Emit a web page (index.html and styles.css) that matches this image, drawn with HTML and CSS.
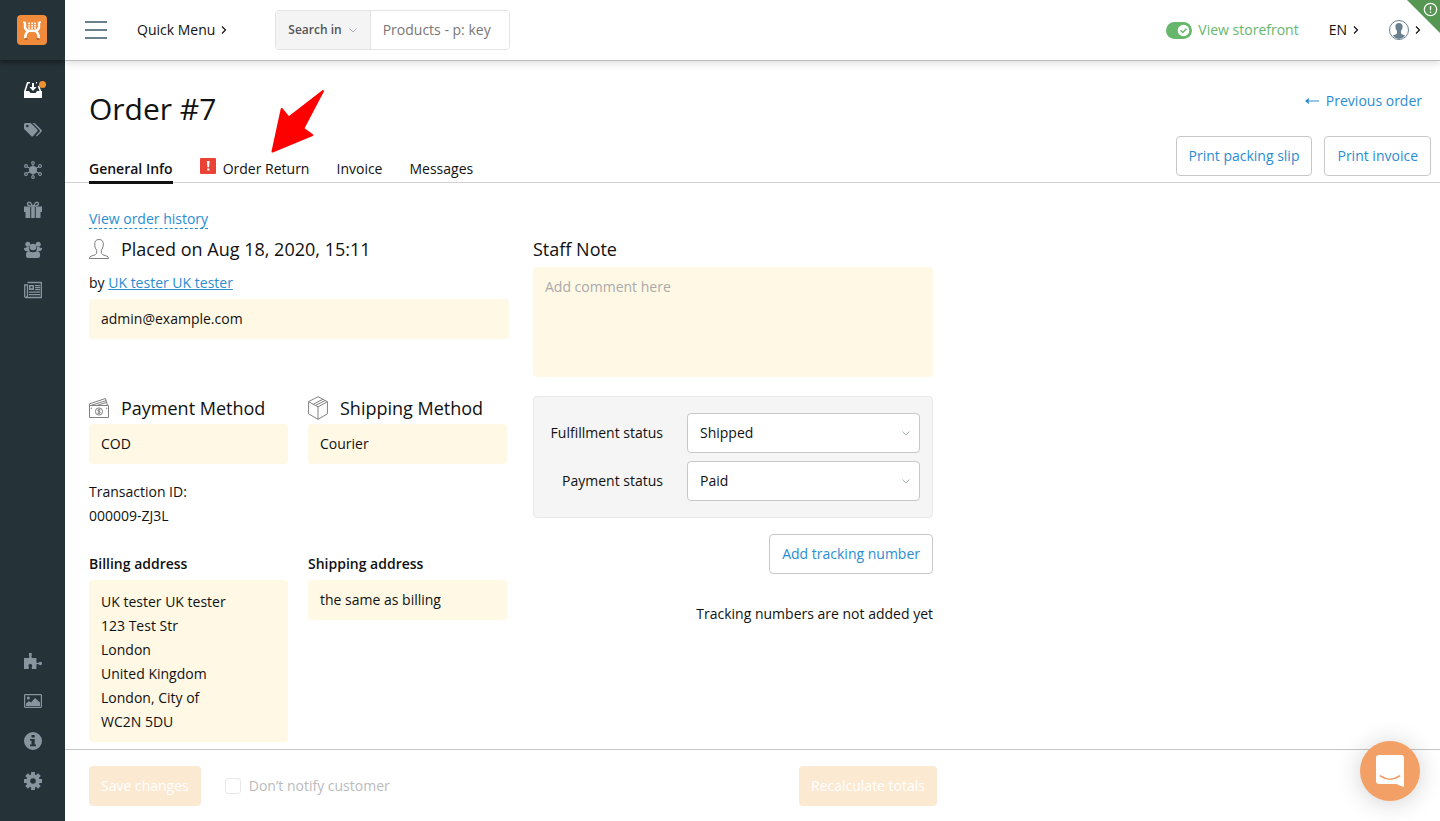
FILE: index.html
```html
<!DOCTYPE html>
<html lang="en">
<head>
<meta charset="utf-8">
<meta name="viewport" content="width=device-width, initial-scale=1">
<title>Order #7</title>
<link rel="stylesheet" href="styles.css">
</head>
<body>
<div class="app">
  <aside class="sidebar">
    <a class="logo" href="#" aria-label="Dashboard">
      <svg width="30" height="30" viewBox="0 0 30 30">
        <rect width="30" height="30" rx="4" fill="#ef8b3b"/>
        <path d="M8 7.500V12Q8 14.800 11.300 15.800H18.700Q22 14.800 22 12V7.500M8.300 23.500V22Q8.300 18 11.300 16.200M21.700 23.500V22Q21.700 18 18.700 16.200" fill="none" stroke="#fff" stroke-width="2.400"/>
        <path d="M6 7.200h2.500M21.500 7.200H24" stroke="#fff" stroke-width="1.400"/>
        <path d="M7.500 24h3M19.500 24h3" stroke="#a85e2c" stroke-width="1.500"/>
        <path d="M11.200 8.400h8M11.200 10.700h8M11.200 13h8" stroke="#fff" stroke-width="1.600" stroke-dasharray="1.800 1.200"/>
      </svg>
    </a>
    <nav class="side-nav" aria-label="Main">
      <a class="is-active" href="#" aria-label="Orders">
        <svg width="18" height="18" viewBox="0 0 18 18"><path d="M0 10v7h18v-7h-5l-1.500 2h-5L5 10z"/><path d="M6 1.800H3.600L.8 10.500M12 1.800h1M14.500 5l2 5.500" fill="none" stroke="currentColor" stroke-width="1.600"/><path d="M8 2h2v4h2.500L9 10 5.500 6H8z"/></svg>
        <span class="dot"></span>
      </a>
      <a href="#" aria-label="Catalog"><svg width="18" height="18" viewBox="0 0 18 18"><path fill-rule="evenodd" d="M0 3.500Q0 2 1.500 2h4.200q.9 0 1.500.6l6 6q1 1 0 2l-4 4.300q-1 1-2 0L.6 8.500Q0 7.900 0 7zM2 5a1.300 1.300 0 1 0 2.600 0A1.300 1.300 0 1 0 2 5z"/><path d="M8.500 2h1.300q.7 0 1.300.6l6.300 6.200q1 1 0 2l-4.500 4.700-.9-1 3.600-3.700q.7-.9-.1-1.700z"/></svg></a>
      <a href="#" aria-label="Sales channels"><svg width="18" height="18" viewBox="0 0 18 18"><circle cx="9" cy="9" r="4"/><g fill="none" stroke="currentColor" stroke-width="1.100"><circle cx="9" cy="1.900" r="1.300"/><circle cx="9" cy="16.100" r="1.300"/><circle cx="2" cy="5" r="1.400"/><circle cx="16" cy="5" r="1.400"/><circle cx="2" cy="13" r="1.400"/><circle cx="16" cy="13" r="1.400"/><path d="M9 3v12M3.200 5.700l11.600 6.600M3.200 12.300l11.600-6.600"/></g></svg></a>
      <a href="#" aria-label="Discounts"><svg width="18" height="18" viewBox="0 0 18 18"><path d="M0 5.500h6.200V17H1.500v-6H0zM11.800 5.500H18V11h-1.500v6h-4.700zM7.200 5.500h3.600V17H7.200z"/><path d="M8.700 5L6.500 1.800Q3.800.3 3.500 2.800q0 2 3 2.200zM9.300 5l2.200-3.200q2.700-1.500 3 1 0 2-3 2.200z" fill="none" stroke="currentColor" stroke-width="1.300"/></svg></a>
      <a href="#" aria-label="Users"><svg width="18" height="18" viewBox="0 0 18 18"><circle cx="3.800" cy="3.300" r="2.500"/><circle cx="14.200" cy="3.300" r="2.500"/><path d="M0 7q2 0 3-1h2.300Q4.800 9 6 10H2q-2 0-2-3zM18 7q-2 0-3-1h-2.300q.5 3-.7 4h4q2 0 2-3z"/><circle cx="9" cy="6" r="3.300"/><path d="M2 13.500Q2 10 5 10q4 2.500 8 0 3 0 3 3.500V15q0 2-2 2H4q-2 0-2-2z"/></svg></a>
      <a href="#" aria-label="Content"><svg width="18" height="18" viewBox="0 0 18 18"><path d="M3.500 1.500h13.800v15H2Q.7 16.500.7 15V4h2.800v10.500q0 1.500-1.500 1.500" fill="none" stroke="currentColor" stroke-width="1.300"/><path fill-rule="evenodd" d="M5 4h5v5H5zM6.500 5.500v1.700h2V5.500zM11 4h5v1.200h-5zM11 6h5v1.200h-5zM11 8h5v1.200h-5zM5 10.500h11v1.200H5zM5 13h11v1.200H5z"/></svg></a>
    </nav>
    <nav class="side-nav side-nav-bottom" aria-label="System">
      <a href="#" aria-label="Add-ons"><svg width="18" height="18" viewBox="0 0 18 18"><path d="M0 6h5q.8-1.700-.2-3.300Q4.500.8 6.300.8t1.600 1.900Q7 4.300 7.800 6h4.600v4.500q1 .8 2.600 0 .7-1 1.700-.8 1.300.3 1.300 1.800t-1.300 1.800q-1 .2-1.700-.8-1.600-.8-2.600 0V17H8q-.8-1.500.2-3 .3-2-1.900-2t-1.900 2q1 1.500.2 3H0z"/></svg></a>
      <a href="#" aria-label="Look and feel"><svg width="18" height="18" viewBox="0 0 18 18"><rect x=".6" y="2.600" width="16.800" height="12.800" rx=".8" fill="none" stroke="currentColor" stroke-width="1.200"/><circle cx="4.300" cy="6" r="1.600"/><path d="M2 14v-2.500L5 9l2 1.500L11 6l5 4.500V14z"/></svg></a>
      <a href="#" aria-label="Help"><svg width="18" height="18" viewBox="0 0 18 18"><path fill-rule="evenodd" d="M9 0a9 9 0 1 1 0 18A9 9 0 0 1 9 0zM7.500 3v2.600h3.200V3zM6 7v1.800h1.500v3.700H6v1.800h6v-1.800h-1.300V7z"/></svg></a>
      <a href="#" aria-label="Settings"><svg width="18" height="18" viewBox="0 0 18 18"><g fill="none" stroke="currentColor"><circle cx="9" cy="9" r="4.800" stroke-width="4"/><path d="M9 0v3M9 15v3M0 9h3M15 9h3M2.600 2.600l2.200 2.200M13.200 13.200l2.200 2.200M2.600 15.400l2.200-2.200M13.200 4.800l2.200-2.200" stroke-width="3.800"/></g></svg></a>
    </nav>
  </aside>

  <div class="main">
    <header class="topbar">
      <button class="burger" type="button" aria-label="Toggle menu"><span></span><span></span><span></span></button>
      <button class="plain quick-menu" type="button">Quick Menu <svg width="6" height="8" viewBox="0 0 6 8"><path d="M1 .5L4.500 4 1 7.500"/></svg></button>
      <form class="search">
        <button class="search-scope" type="button">Search in <svg width="8" height="5" viewBox="0 0 8 5"><path d="M.5.5L4 4 7.500.5"/></svg></button>
        <input class="search-input" type="text" aria-label="Search" placeholder="Products - p: key">
      </form>
      <div class="top-actions">
        <a class="storefront" href="#">
          <svg width="26" height="17" viewBox="0 0 26 17"><rect width="26" height="17" rx="8.500" fill="#66b76c"/><circle cx="17.500" cy="8.500" r="5.800" fill="#fff"/><path d="M14.500 8.300l2.200 2.200 3.800-3.800" fill="none" stroke="#66b76c" stroke-width="1.500"/></svg>
          View storefront</a>
        <button class="plain" type="button">EN <svg width="6" height="8" viewBox="0 0 6 8"><path d="M1 .5L4.500 4 1 7.500"/></svg></button>
        <button class="plain account" type="button" aria-label="Account">
          <svg class="avatar" width="20" height="20" viewBox="0 0 20 20"><circle cx="10" cy="10" r="9.500" fill="#fff" stroke="#6b808f"/><path d="M10 3q3.600 0 3.600 3.700 0 2.800-1.600 4.300v2.500q.5 1 4.300 2.100Q13.500 19 10 19t-6.300-3.400Q7.500 14.500 8 13.500V11Q6.400 9.500 6.400 6.700 6.400 3 10 3z" fill="#6b808f"/></svg>
          <svg width="6" height="8" viewBox="0 0 6 8"><path d="M1 .5L4.500 4 1 7.500"/></svg>
        </button>
      </div>
      <a class="corner" href="#" aria-label="Notices"><svg width="33" height="33" viewBox="0 0 33 33"><path d="M0 0h33v33z" fill="#559652"/><circle cx="23.500" cy="9.500" r="6.200" fill="none" stroke="#fff" stroke-width="1.300"/><path d="M23.500 6v4.300M23.500 11.500v1.500" stroke="#fff" stroke-width="1.300"/></svg></a>
    </header>

    <section class="page-head">
      <div class="head-left">
        <h1>Order #7</h1>
        <nav class="tabs" aria-label="Order sections">
          <a class="is-current" href="#">General Info</a>
          <a href="#"><svg width="16" height="16" viewBox="0 0 16 16"><rect width="16" height="16" rx="1" fill="#ea4335"/><path d="M6.900 3h2.700l-.5 6.200H7.400zM7.200 10.500h2.200v2H7.200z" fill="#fff"/></svg>Order Return</a>
          <a href="#">Invoice</a>
          <a href="#">Messages</a>
        </nav>
      </div>
      <div class="head-right">
        <a class="prev" href="#"><svg width="14" height="8" viewBox="0 0 14 8"><path d="M1 4h13" stroke="#2a8dd2"/><path d="M0 4l4-3.200Q3.200 4 4 7.200z" fill="#2a8dd2"/></svg>Previous order</a>
        <div class="head-buttons">
          <button class="btn" type="button">Print packing slip</button>
          <button class="btn" type="button">Print invoice</button>
        </div>
      </div>
      <svg class="pointer" width="56" height="66" viewBox="0 0 56 66"><path d="M2.500 63.500L11.700 21l7 8.500L53 3 33.300 40.500l9 6.500z" fill="#f00" stroke="#f00" stroke-width="2" stroke-linejoin="round"/></svg>
    </section>

    <main class="content">
      <a class="history" href="#">View order history</a>
      <section class="customer">
        <h2><svg width="20" height="20" viewBox="0 0 20 20"><path d="M10 .5Q14.700.5 14.300 6q-.3 3.500-2 5.200v3q.3 1.700 5.700 3 1.500.6 1.500 2.300H.5q0-1.700 1.500-2.300 5.400-1.300 5.700-3v-3Q6 9.500 5.700 6 5.300.5 10 .5z"/></svg>Placed on Aug 18, 2020, 15:11</h2>
        <p class="by">by <a href="#">UK tester UK tester</a></p>
        <div class="field">admin@example.com</div>
      </section>
      <section class="note">
        <h2><label for="note">Staff Note</label></h2>
        <textarea id="note" placeholder="Add comment here"></textarea>
      </section>
      <section class="methods">
        <div>
          <h2><svg width="20" height="24" viewBox="0 0 20 24"><path d="M.5 9.500h19v12H.5zM.5 9.500V7.800L16.500 2.500l2 7M2.500 9.200l14.500-4.500M8 9.400l9.800-3M3 12q-1 0-1 1M17 12q1 0 1 1"/><circle cx="10" cy="15.500" r="3.600"/><path d="M11.500 14q-1.500-1-2.500 0t1 1.500 1 1.500-2.500 0M10 13v5"/></svg>Payment Method</h2>
          <div class="field">COD</div>
          <p class="transaction">Transaction ID:<br>000009-ZJ3L</p>
          <h3>Billing address</h3>
          <address class="field address">UK tester UK tester<br>123 Test Str<br>London<br>United Kingdom<br>London, City of<br>WC2N 5DU</address>
        </div>
        <div>
          <h2><svg width="20" height="24" viewBox="0 0 20 24"><path d="M10 .7l9.400 5v12.200L10 23.300.6 17.900V5.700zM.6 5.700l9.400 5.200 9.400-5.200M10 10.900v12.400M5.300 8.300l9.500-5M7.500 9.500l9.500-5"/></svg>Shipping Method</h2>
          <div class="field">Courier</div>
          <p class="transaction"></p>
          <h3>Shipping address</h3>
          <div class="field">the same as billing</div>
        </div>
      </section>
      <section class="status">
        <div class="panel">
          <label for="fulfillment">Fulfillment status</label>
          <div class="select"><select id="fulfillment"><option>Shipped</option></select><svg width="8" height="5" viewBox="0 0 8 5"><path d="M.5.5L4 4 7.500.5"/></svg></div>
          <label for="payment">Payment status</label>
          <div class="select"><select id="payment"><option>Paid</option></select><svg width="8" height="5" viewBox="0 0 8 5"><path d="M.5.5L4 4 7.500.5"/></svg></div>
        </div>
        <button class="btn" type="button">Add tracking number</button>
        <p>Tracking numbers are not added yet</p>
      </section>
    </main>

    <footer class="actions">
      <div class="actions-left">
        <button class="btn-primary" type="button" disabled>Save changes</button>
        <label class="notify"><input type="checkbox" disabled>Don’t notify customer</label>
      </div>
      <button class="btn-primary" type="button" disabled>Recalculate totals</button>
    </footer>
  </div>
</div>
<button class="chat" type="button" aria-label="Open chat"><svg width="28" height="32" viewBox="0 0 28 32"><path d="M3 0h22q3 0 3 3v29q-4-1-7.500-3H3q-3 0-3-3V3q0-3 3-3z" fill="#fff"/><path d="M4.500 21q9.500 6.500 19 0" fill="none" stroke="#f3a066" stroke-width="1.700" stroke-linecap="round"/></svg></button>
</body>
</html>
```
FILE: styles.css
```css
* { box-sizing: border-box; }

body {
  margin: 0;
  font: 14px/24px "Open Sans", "Noto Sans", sans-serif;
  color: #111;
  background: #fff;
}

h1, h2, h3, p { margin: 0; }
button, input, select, textarea { font: inherit; color: inherit; }
button { cursor: pointer; }
a { color: #2a8dd2; text-decoration: none; }

.app { display: flex; min-height: 100vh; }

/* Sidebar */
.sidebar {
  display: flex;
  flex-direction: column;
  width: 65px;
  flex-shrink: 0;
  background: #253238;
  color: #88959f;
}
.logo {
  display: flex;
  align-items: center;
  height: 60px;
  padding-left: 17px;
  box-shadow: 0 1px 6px 1px rgba(0, 0, 0, .5);
  clip-path: inset(0 0 -10px 0);
}
.logo svg { display: block; }
.side-nav { padding-top: 10px; }
.side-nav a {
  position: relative;
  display: flex;
  align-items: center;
  justify-content: center;
  height: 40px;
  color: inherit;
}
.side-nav svg { fill: currentColor; }
.side-nav .is-active { color: #fff; }
.dot {
  position: absolute;
  top: 11px;
  right: 19px;
  width: 7px;
  height: 7px;
  border-radius: 50%;
  background: #f29130;
}
.side-nav-bottom { margin-top: auto; padding-bottom: 20px; }

/* Top bar */
.main { display: flex; flex-direction: column; flex: 1; min-width: 0; }
.topbar {
  position: relative;
  display: flex;
  align-items: center;
  height: 61px;
  padding: 0 19px 0 20px;
  border-bottom: 1px solid #bbb;
  box-shadow: 0 2px 8px rgba(0, 0, 0, .14);
  clip-path: inset(0 0 -12px 0);
}
.burger {
  display: flex;
  flex-direction: column;
  gap: 6px;
  width: 22px;
  margin-right: 30px;
  padding: 0;
  border: 0;
  background: none;
}
.burger span { height: 2px; background: #6b808f; }
.plain {
  display: flex;
  align-items: center;
  gap: 6px;
  padding: 0;
  border: 0;
  background: none;
}
.plain path { fill: none; stroke: #111; stroke-width: 1.2; }
.plain .avatar path { fill: #6b808f; stroke: none; }
.quick-menu { margin-right: 48px; }
.search {
  display: flex;
  width: 235px;
  height: 40px;
  border: 1px solid #e3e3e3;
  border-radius: 4px;
  overflow: hidden;
}
.search-scope {
  display: flex;
  align-items: center;
  gap: 7px;
  flex-shrink: 0;
  padding: 0 13px 0 12px;
  border: 0;
  border-right: 1px solid #e3e3e3;
  background: #f4f4f4;
  color: #555;
  font-size: 12px;
  font-weight: 600;
}
.search-scope path, .select path { fill: none; stroke: #a7b0bd; }
.search-input { flex: 1; min-width: 0; padding: 0 12px; border: 0; background: #fff; }
.search-input::placeholder { color: #777; }
.top-actions {
  display: flex;
  align-items: center;
  gap: 30px;
  margin-left: auto;
}
.storefront { display: flex; align-items: center; gap: 6px; color: #66b76c; }
.corner { position: absolute; top: 0; right: 0; }
.corner svg { display: block; }

/* Page heading */
.page-head {
  position: relative;
  display: flex;
  justify-content: space-between;
  padding: 28px 9px 0 24px;
  border-bottom: 1px solid #d2d2d2;
}
h1 { margin-bottom: 28px; font-size: 30px; font-weight: 400; line-height: 40px; }
.tabs { display: flex; gap: 27px; margin-bottom: -2px; }
.tabs a {
  display: flex;
  color: inherit;
  border-bottom: 3px solid transparent;
}
.tabs svg { margin: 1px 7px 0 0; }
.tabs .is-current { font-weight: 600; border-color: #111; }
.head-right { display: flex; flex-direction: column; align-items: flex-end; gap: 23px; }
.prev { display: flex; align-items: center; gap: 7px; padding-right: 9px; }
.head-buttons { display: flex; gap: 12px; }
.pointer { position: absolute; top: 27px; left: 205px; pointer-events: none; }
.btn {
  height: 40px;
  padding: 0 12px;
  border: 1px solid #c8c8c8;
  border-radius: 4px;
  background: #fff;
  color: #2a8dd2;
}

/* Order details */
.content {
  display: grid;
  grid-template-columns: 420px 400px;
  column-gap: 24px;
  align-content: start;
  flex: 1;
  padding: 24px 24px 7px;
}
.history {
  grid-column: 1 / -1;
  justify-self: start;
  height: 22px;
  margin-bottom: 8px;
  border-bottom: 1px dashed #2a8dd2;
}
h2 {
  display: flex;
  align-items: center;
  gap: 12px;
  height: 24px;
  margin-bottom: 4px;
  font-size: 18px;
  font-weight: 400;
}
h2 svg { flex-shrink: 0; fill: none; stroke: #808080; }
h3 { margin-bottom: 4px; font-size: 14px; font-weight: 600; }
.by { margin: 10px 0 4px; }
.by a { text-decoration: underline; }
.field {
  padding: 8px 12px;
  border-radius: 4px;
  background: #fff8e5;
}
.address { padding: 10px 12px 8px; font-style: normal; }
.note textarea {
  display: block;
  width: 100%;
  height: 110px;
  margin-top: 6px;
  padding: 8px 12px;
  border: 0;
  border-radius: 4px;
  background: #fff8e5;
  resize: none;
}
.note textarea::placeholder { color: #aaa; }
.customer, .note { margin-bottom: 19px; }
.methods {
  display: grid;
  grid-template-columns: repeat(2, 199px);
  gap: 20px;
}
.transaction { min-height: 48px; margin: 16px 0 24px; }
.status { display: flex; flex-direction: column; align-items: flex-end; }
.panel {
  display: grid;
  grid-template-columns: 1fr 233px;
  align-items: center;
  gap: 8px 24px;
  width: 100%;
  margin-bottom: 16px;
  padding: 16px 12px;
  border: 1px solid #e8e8e8;
  border-radius: 4px;
  background: #f5f5f5;
  text-align: right;
}
.select { position: relative; }
.select select {
  display: block;
  width: 100%;
  height: 40px;
  padding: 0 12px;
  border: 1px solid #c8c8c8;
  border-radius: 4px;
  background: #fff;
  appearance: none;
}
.select svg { position: absolute; top: 18px; right: 10px; pointer-events: none; }
.status p { margin-top: 28px; }

/* Bottom action bar */
.actions {
  position: sticky;
  bottom: 0;
  display: flex;
  padding: 16px 24px 15px;
  border-top: 1px solid #c4c6c6;
  background: #fff;
}
.actions-left { display: flex; gap: 24px; width: 710px; }
.btn-primary {
  height: 40px;
  padding: 0 12px;
  border: 0;
  border-radius: 4px;
  background: #fce9d2;
  color: #fff;
}
.notify { display: flex; align-items: center; gap: 8px; color: #bbb; }
.notify input {
  width: 16px;
  height: 16px;
  margin: 0;
  border: 1px solid #e8e8e8;
  border-radius: 3px;
  background: #fff;
  appearance: none;
}

.chat {
  position: fixed;
  right: 20px;
  bottom: 20px;
  display: flex;
  align-items: center;
  justify-content: center;
  width: 60px;
  height: 60px;
  padding: 0;
  border: 0;
  border-radius: 50%;
  background: #f3a066;
  box-shadow: 0 2px 24px rgba(0, 0, 0, .18);
}
```
